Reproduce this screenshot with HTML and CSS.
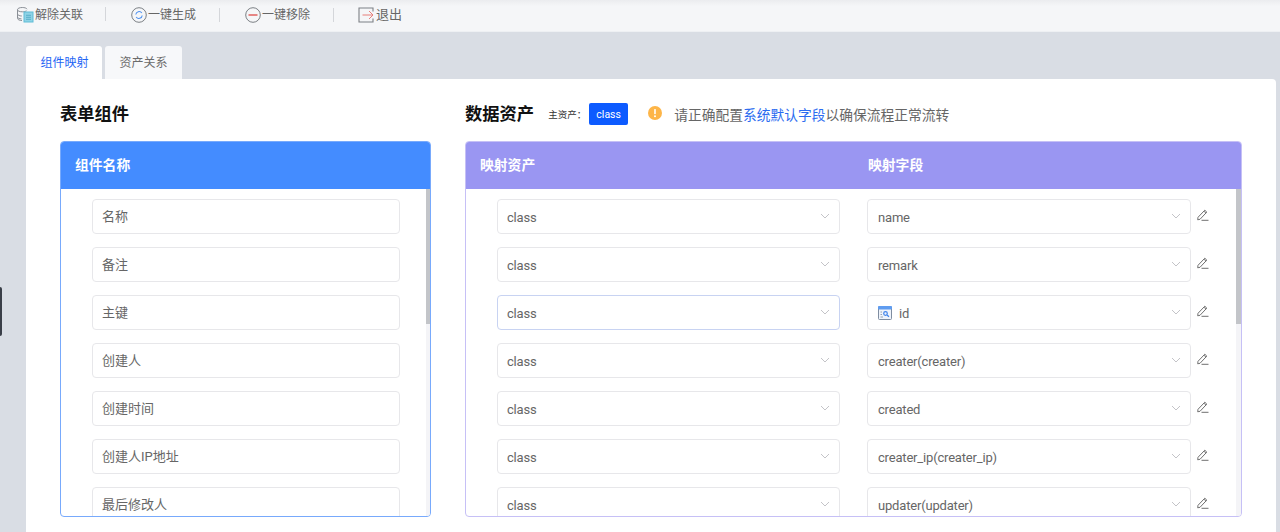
FILE: index.html
```html
<!DOCTYPE html>
<html lang="zh">
<head>
<meta charset="utf-8">
<title>组件映射</title>
<link rel="stylesheet" href="styles.css">
</head>
<body>
<div class="handle"></div>
<header class="toolbar">
  <div class="tool">
    <svg class="tool-icon" width="18" height="18" viewBox="0 0 18 18" fill="none"><path d="M11 3.200C10.600 2 8.400 1.500 6.300 1.500 3.500 1.500 1.500 2.400 1.500 3.700v8.600c0 1.300 2 2.200 4.500 2.200" stroke="#8a8f96"/><path d="M1.500 3.700c0 1.200 2 2.100 4.800 2.100 1.800 0 3.400-.4 4.200-1M1.500 7.900c0 1.200 2 2.100 4.300 2.100M1.500 11c0 1 1.800 1.800 4 1.900" stroke="#8a8f96"/><rect x="8" y="6" width="9" height="10" fill="#8ed3e6" stroke="#5fbcd6"/><path d="M10 9.300h5M10 11.300h5M10 13.300h5" stroke="#4ba6c2" stroke-width=".8"/></svg>
    <span>解除关联</span>
  </div>
  <div class="tool">
    <svg class="tool-icon" width="16" height="16" viewBox="0 0 16 16" fill="none"><circle cx="8" cy="8" r="7.300" stroke="#7c8085"/><path d="M4.800 7.500A3.300 3.300 0 0 1 10.800 6" stroke="#4b8ff0" stroke-width="1.100"/><path d="M11.200 8.500A3.300 3.300 0 0 1 5.200 10" stroke="#4b8ff0" stroke-width="1.100"/></svg>
    <span>一键生成</span>
  </div>
  <div class="tool">
    <svg class="tool-icon" width="16" height="16" viewBox="0 0 16 16" fill="none"><circle cx="8" cy="8" r="7.300" stroke="#7c8085"/><path d="M3.500 8h9" stroke="#e0605f" stroke-width="1.500"/></svg>
    <span>一键移除</span>
  </div>
  <div class="tool tool-last">
    <svg class="tool-icon" width="16" height="16" viewBox="0 0 16 16" fill="none"><path d="M15 4.500V1H1v14h14v-3.500" stroke="#7c8085" stroke-width="1.100"/><path d="M4.500 8H15M11 4l4 4-4 4" stroke="#e77f7a"/></svg>
    <span class="tool-exit">退出</span>
  </div>
</header>
<main class="page">
  <nav class="tabs">
    <div class="tab tab-active">组件映射</div>
    <div class="tab">资产关系</div>
  </nav>
  <section class="card">
    <div class="col col-left">
      <h2 class="title-row"><span class="title">表单组件</span></h2>
      <div class="panel panel-blue">
        <div class="panel-head head-blue"><span>组件名称</span></div>
        <div class="panel-body">
          <div class="rows rows-left">
            <div class="box">名称</div>
            <div class="box">备注</div>
            <div class="box">主键</div>
            <div class="box">创建人</div>
            <div class="box">创建时间</div>
            <div class="box">创建人IP地址</div>
            <div class="box">最后修改人</div>
          </div>
          <div class="track"><div class="thumb"></div></div>
        </div>
      </div>
    </div>
    <div class="col col-right">
      <div class="title-row">
        <span class="title">数据资产</span>
        <span class="main-label">主资产：</span>
        <span class="main-tag">class</span>
        <svg class="warn" width="14" height="14" viewBox="0 0 14 14"><circle cx="7" cy="7" r="7" fill="#fdb548"/><rect x="6.200" y="3" width="1.600" height="5.200" rx=".6" fill="#fff"/><circle cx="7" cy="10.200" r="1" fill="#fff"/></svg>
        <span class="hint">请正确配置<span class="hint-link">系统默认字段</span>以确保流程正常流转</span>
      </div>
      <div class="panel panel-purple">
        <div class="panel-head head-purple"><span class="head-asset">映射资产</span><span>映射字段</span></div>
        <div class="panel-body">
          <div class="rows rows-right">
            <div class="map-row">
              <div class="box select select-asset">class<svg class="chev" width="10" height="6" viewBox="0 0 10 6" fill="none"><path d="M1 1l4 4 4-4"/></svg></div>
              <div class="box select select-field">name<svg class="chev" width="10" height="6" viewBox="0 0 10 6" fill="none"><path d="M1 1l4 4 4-4"/></svg></div>
              <svg class="pencil" width="12" height="12" viewBox="0 0 12 12" fill="none"><path d="M1 8.300L7.800 1.200l2 1.900-6.800 7.200-2.300.5zM6.900 2.100l2 2M4.500 11.300h7"/></svg>
            </div>
            <div class="map-row">
              <div class="box select select-asset">class<svg class="chev" width="10" height="6" viewBox="0 0 10 6" fill="none"><path d="M1 1l4 4 4-4"/></svg></div>
              <div class="box select select-field">remark<svg class="chev" width="10" height="6" viewBox="0 0 10 6" fill="none"><path d="M1 1l4 4 4-4"/></svg></div>
              <svg class="pencil" width="12" height="12" viewBox="0 0 12 12" fill="none"><path d="M1 8.300L7.800 1.200l2 1.900-6.800 7.200-2.300.5zM6.900 2.100l2 2M4.500 11.300h7"/></svg>
            </div>
            <div class="map-row">
              <div class="box select select-asset select-focus">class<svg class="chev" width="10" height="6" viewBox="0 0 10 6" fill="none"><path d="M1 1l4 4 4-4"/></svg></div>
              <div class="box select select-field">
                <svg class="field-icon" width="14" height="14" viewBox="0 0 14 14" fill="none"><rect x=".5" y=".5" width="13" height="13" rx="1" fill="#eef3fb" stroke="#7f8da0"/><rect x="0" y="0" width="14" height="3.500" rx="1" fill="#5f9cf0"/><circle cx="7.500" cy="7.500" r="1.800" stroke="#3f83ea" stroke-width="1.200"/><path d="M9 9l2 1.800" stroke="#3f83ea" stroke-width="1.200"/><path d="M2.500 6h1.500M2.500 8.500h1.500M2.500 11h2.500" stroke="#7f8da0" stroke-width=".8"/></svg>
                id<svg class="chev" width="10" height="6" viewBox="0 0 10 6" fill="none"><path d="M1 1l4 4 4-4"/></svg></div>
              <svg class="pencil" width="12" height="12" viewBox="0 0 12 12" fill="none"><path d="M1 8.300L7.800 1.200l2 1.900-6.800 7.200-2.300.5zM6.900 2.100l2 2M4.500 11.300h7"/></svg>
            </div>
            <div class="map-row">
              <div class="box select select-asset">class<svg class="chev" width="10" height="6" viewBox="0 0 10 6" fill="none"><path d="M1 1l4 4 4-4"/></svg></div>
              <div class="box select select-field">creater(creater)<svg class="chev" width="10" height="6" viewBox="0 0 10 6" fill="none"><path d="M1 1l4 4 4-4"/></svg></div>
              <svg class="pencil" width="12" height="12" viewBox="0 0 12 12" fill="none"><path d="M1 8.300L7.800 1.200l2 1.900-6.800 7.200-2.300.5zM6.900 2.100l2 2M4.500 11.300h7"/></svg>
            </div>
            <div class="map-row">
              <div class="box select select-asset">class<svg class="chev" width="10" height="6" viewBox="0 0 10 6" fill="none"><path d="M1 1l4 4 4-4"/></svg></div>
              <div class="box select select-field">created<svg class="chev" width="10" height="6" viewBox="0 0 10 6" fill="none"><path d="M1 1l4 4 4-4"/></svg></div>
              <svg class="pencil" width="12" height="12" viewBox="0 0 12 12" fill="none"><path d="M1 8.300L7.800 1.200l2 1.900-6.800 7.200-2.300.5zM6.900 2.100l2 2M4.500 11.300h7"/></svg>
            </div>
            <div class="map-row">
              <div class="box select select-asset">class<svg class="chev" width="10" height="6" viewBox="0 0 10 6" fill="none"><path d="M1 1l4 4 4-4"/></svg></div>
              <div class="box select select-field">creater_ip(creater_ip)<svg class="chev" width="10" height="6" viewBox="0 0 10 6" fill="none"><path d="M1 1l4 4 4-4"/></svg></div>
              <svg class="pencil" width="12" height="12" viewBox="0 0 12 12" fill="none"><path d="M1 8.300L7.800 1.200l2 1.900-6.800 7.200-2.300.5zM6.900 2.100l2 2M4.500 11.300h7"/></svg>
            </div>
            <div class="map-row">
              <div class="box select select-asset">class<svg class="chev" width="10" height="6" viewBox="0 0 10 6" fill="none"><path d="M1 1l4 4 4-4"/></svg></div>
              <div class="box select select-field">updater(updater)<svg class="chev" width="10" height="6" viewBox="0 0 10 6" fill="none"><path d="M1 1l4 4 4-4"/></svg></div>
              <svg class="pencil" width="12" height="12" viewBox="0 0 12 12" fill="none"><path d="M1 8.300L7.800 1.200l2 1.900-6.800 7.200-2.300.5zM6.900 2.100l2 2M4.500 11.300h7"/></svg>
            </div>
          </div>
          <div class="track"><div class="thumb"></div></div>
        </div>
      </div>
    </div>
  </section>
</main>
</body>
</html>
```
FILE: styles.css
```css
* { box-sizing: border-box; }
html, body { margin: 0; height: 100%; overflow: hidden; }
body {
  background: #d9dde4;
  color: #5f5f5f;
  font-family: Roboto, "Noto Sans CJK SC", sans-serif;
  font-size: 13px;
}
.handle {
  position: absolute;
  left: 0;
  top: 287px;
  width: 2px;
  height: 49px;
  background: #3a3f48;
  border-radius: 0 2px 2px 0;
}
.toolbar {
  height: 32px;
  display: flex;
  align-items: center;
  padding: 0 0 1px 16px;
  background: linear-gradient(#ebecef 0, #f5f6f8 6px);
  border-bottom: 1px solid #eef0f3;
  font-size: 12px;
  color: #666;
}
.tool { display: flex; align-items: center; width: 114px; position: relative; }
.tool span { line-height: 16px; }
.tool:first-child { width: 99px; }
.tool::after {
  content: "";
  position: absolute;
  right: 9px;
  top: 1px;
  height: 14px;
  width: 1px;
  background: #d4d6da;
}
.tool-last::after { display: none; }
.tool-icon { flex: none; margin-right: 1px; }
.tool-exit { font-size: 13px; margin-left: 1px; }
.tool:nth-child(2) { padding-left: 16px; }
.tool:nth-child(3) { padding-left: 16px; }
.tool:nth-child(4) { padding-left: 15px; }
.page { padding: 14px 4px 0 26px; }
.tabs { display: flex; gap: 3px; height: 33px; }
.tab {
  width: 77px;
  height: 33px;
  border-radius: 3px 3px 0 0;
  background: #f7f8fa;
  font-size: 12px;
  line-height: 34px;
  text-align: center;
  color: #6b6b6b;
}
.tab-active { width: 76px; padding-left: 1px; background: #fff; color: #1f66f5; }
.card {
  height: 453px;
  background: #fff;
  border-radius: 0 4px 0 0;
  display: flex;
  padding: 0 34px;
  gap: 34px;
}
.col-left { width: 371px; flex: none; }
.col-right { width: 777px; flex: none; }
.title-row {
  height: 62px;
  margin: 0;
  display: flex;
  align-items: center;
  padding-top: 7px;
  font-weight: normal;
}
.title { font-size: 17.300px; font-weight: 700; color: #111; margin-bottom: 2px; }
.main-label { margin-left: 14px; font-size: 9.500px; color: #333; width: 41px; }
.main-tag {
  width: 39px;
  height: 22px;
  background: #0d5bff;
  color: #fff;
  border-radius: 2px;
  font-size: 10.500px;
  line-height: 23px;
  text-align: center;
}
.warn { margin-left: 20px; margin-bottom: 2px; flex: none; }
.hint { margin-left: 12px; font-size: 13.750px; color: #666; }
.hint-link { color: #2b6cf0; }
.panel {
  height: 376px;
  border: 1px solid;
  border-radius: 4px;
  overflow: hidden;
  display: flex;
  flex-direction: column;
}
.panel-blue { border-color: #78aafc; }
.panel-purple { border-color: #c6c0f6; }
.panel-head {
  flex: none;
  margin: -1px -1px 0;
  padding: 0 0 3px 15px;
  display: flex;
  align-items: center;
  color: #fff;
  font-size: 13.800px;
  font-weight: 700;
  height: 48px;
}
.head-blue { background: #448cff; }
.head-purple { background: #9a96f2; }
.head-asset { width: 388px; }
.panel-body { position: relative; flex: 1; overflow: hidden; }
.rows { display: flex; flex-direction: column; gap: 13px; padding-top: 10px; }
.rows-left { padding-left: 31px; }
.rows-right { padding-left: 31px; }
.box {
  flex: none;
  height: 35px;
  border: 1px solid #e7e7ea;
  border-radius: 4px;
  background: #fff;
  line-height: 34px;
  padding-left: 9px;
  color: #666;
  font-size: 13px;
}
.rows-left .box { width: 308px; }
.map-row { display: flex; align-items: center; flex: none; }
.select { position: relative; display: flex; align-items: center; padding-top: 1px; line-height: 33px; letter-spacing: -0.180px; }
.select-asset { width: 343px; margin-right: 27px; }
.select-field { width: 324px; padding-left: 10px; }
.select-focus { border-color: #c8d3f2; }
.chev { position: absolute; right: 9px; top: 13px; stroke: #c4c4c8; stroke-width: 1; }
.pencil { margin-left: 6px; margin-top: -3px; stroke: #707070; stroke-width: 1; flex: none; }
.field-icon { margin-right: 7px; flex: none; }
.track {
  position: absolute;
  right: 0;
  top: 0;
  bottom: 0;
  width: 5px;
  background: #f4f4f7;
}
.panel-blue .track { width: 4px; }
.thumb { height: 135px; background: #c3c5c9; }
```
